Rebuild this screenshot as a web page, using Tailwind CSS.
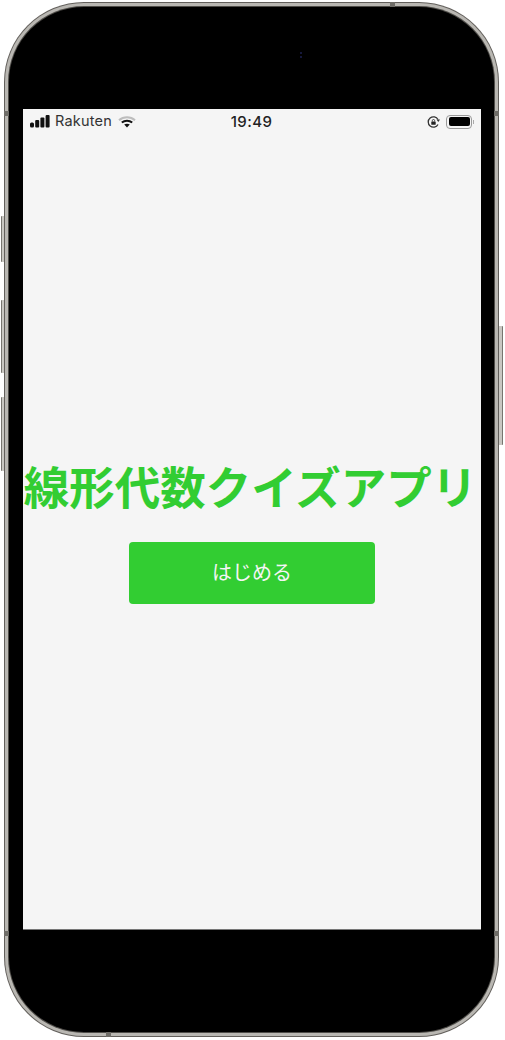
<!DOCTYPE html>
<html lang="ja">
<head>
  <meta charset="UTF-8">
  <title>線形代数クイズアプリ</title>
  <script src="https://cdn.jsdelivr.net/npm/@tailwindcss/browser@4"></script>
</head>
<body class="bg-white w-[505px] h-[1040px] overflow-hidden font-['Inter','Noto_Sans_CJK_JP',sans-serif]">
  <div class="relative w-[505px] h-[1040px] pt-[2px] pl-[4px]">
    <!-- side buttons -->
    <div class="absolute left-[1px] top-[216px] w-[3px] h-[46px] bg-[#c9c7c2] border-l border-[#77756f] rounded-l-[1px]"></div>
    <div class="absolute left-[1px] top-[300px] w-[3px] h-[73px] bg-[#c9c7c2] border-l border-[#77756f] rounded-l-[1px]"></div>
    <div class="absolute left-[1px] top-[397px] w-[3px] h-[74px] bg-[#c9c7c2] border-l border-[#77756f] rounded-l-[1px]"></div>
    <div class="absolute left-[499px] top-[326px] w-[4px] h-[119px] bg-[#c9c7c2] border-r border-[#77756f] rounded-r-[1px]"></div>

    <!-- phone frame -->
    <div class="relative w-[495px] h-[1035px] rounded-[80px] bg-[#625f5b] p-[1px]">
      <div class="w-full h-full rounded-[79px] bg-[#b9b7b2] p-[3px]">
        <div class="w-full h-full rounded-[76px] bg-[#4f4d49] p-[1px]">
          <div class="w-full h-full rounded-[75px] bg-black pt-[102px] pl-[14px]">
            <!-- screen -->
            <main class="relative w-[458px] h-[821px] bg-[#f5f5f5] border-b border-[#777] flex flex-col">
              <div class="flex items-center h-[25px] text-[#333]">
                <div class="w-[162px] flex items-center pl-[7px] gap-[5px]">
                  <svg width="20" height="13" viewBox="0 0 20 13" fill="#111"><rect x="0" y="7.500" width="4" height="5" rx="1.500"/><rect x="5.200" y="5" width="4" height="7.500" rx="1"/><rect x="10.400" y="2.500" width="4" height="10" rx="1"/><rect x="15.600" y="0" width="4" height="12.500" rx="1"/></svg>
                  <span class="text-[14.500px] leading-none tracking-[.2px]">Rakuten</span>
                  <svg class="ml-[1px]" width="18" height="12" viewBox="0 0 18 12"><path d="M1 4.200C5.500 .2 12.500 .2 17 4.200" fill="none" stroke="#bdbdbd" stroke-width="2"/><path d="M3.800 6.600C6.800 4 11.200 4 14.200 6.600" fill="none" stroke="#111" stroke-width="2"/><path d="M6.200 8.600C7.800 7.300 10.200 7.300 11.800 8.600L9 11.500Z" fill="#111"/></svg>
                </div>
                <span class="w-[126px] pl-[7px] text-center text-[15px] font-medium tracking-[.4px] leading-none text-[#222]">19:49</span>
                <div class="flex-1 flex items-center justify-end pr-[7px] gap-[5px]">
                  <svg width="15" height="14" viewBox="0 0 14 14"><path d="M11.500 9.500A5.200 5.200 0 1 1 11.500 4.500" fill="none" stroke="#333" stroke-width="1.300"/><path d="M10 4.500H13.500L11.800 7Z" fill="#333"/><rect x="4.800" y="6.500" width="4.400" height="3.300" rx=".6" fill="#222"/><path d="M5.800 6.500V5.700A1.200 1.200 0 0 1 8.200 5.700V6.500" fill="none" stroke="#222" stroke-width=".8"/></svg>
                  <div class="flex items-center gap-[1px]">
                    <div class="w-[26px] h-[14px] rounded-[4px] border border-[#9a9a9a] p-[1.500px]">
                      <div class="w-full h-full rounded-[2px] bg-black"></div>
                    </div>
                    <div class="w-[1px] h-[4px] bg-[#aaa]"></div>
                  </div>
                </div>
              </div>
              <div class="flex-1 flex flex-col items-center pt-[330px]">
                <h1 class="text-[45.500px] leading-[50px] font-semibold text-[#32cd32] whitespace-nowrap -ml-[3px]">線形代数クイズアプリ</h1>
                <button class="mt-[28px] w-[246px] h-[62px] rounded-[4px] bg-[#32cd32] text-[#f5f5f5] text-[20px]">はじめる</button>
              </div>
            </main>
          </div>
        </div>
      </div>
      <!-- antenna bands -->
      <div class="absolute left-0 top-[109px] w-[5px] h-[5px] bg-[#6f6d68]"></div>
      <div class="absolute right-0 top-[109px] w-[5px] h-[5px] bg-[#6f6d68]"></div>
      <div class="absolute left-0 top-[929px] w-[5px] h-[5px] bg-[#6f6d68]"></div>
      <div class="absolute right-0 top-[929px] w-[5px] h-[5px] bg-[#6f6d68]"></div>
      <div class="absolute left-[386px] top-0 w-[5px] h-[5px] bg-[#6f6d68]"></div>
      <div class="absolute left-[102px] bottom-0 w-[5px] h-[5px] bg-[#6f6d68]"></div>
    </div>
    <!-- camera dot -->
    <div class="absolute left-[300px] top-[52px] w-[2px] h-[2px] rounded-full bg-[#1c2050]"></div>
    <div class="absolute left-[300px] top-[56px] w-[2px] h-[2px] rounded-full bg-[#1c2050]"></div>
  </div>
</body>
</html>
